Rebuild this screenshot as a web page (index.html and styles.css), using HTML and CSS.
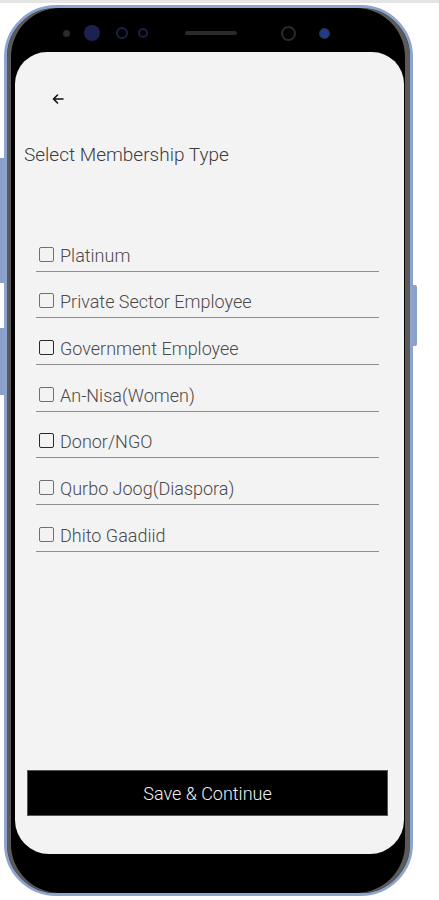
FILE: index.html
```html
<!DOCTYPE html>
<html lang="en">
<head>
    <meta charset="UTF-8">
    <meta name="viewport" content="width=device-width, initial-scale=1.0">
    <title>Select Membership Type</title>
    <link rel="stylesheet" href="styles.css">
</head>
<body>
    <div class="phone">
        <span class="side-btn left-1"></span>
        <span class="side-btn left-2"></span>
        <span class="side-btn right-1"></span>

        <div class="top-bezel">
            <span class="dot sensor"></span>
            <span class="dot lens-big"></span>
            <span class="dot ring"></span>
            <span class="dot ring small"></span>
            <span class="speaker"></span>
            <span class="dot front-cam"></span>
            <span class="dot blue-cam"></span>
        </div>

        <div class="screen">
            <div class="app-bar">
                <svg class="back" width="14" height="14" viewBox="0 0 14 14">
                    <path d="M12 7H2.5M6.5 3L2.5 7l4 4" fill="none" stroke="#111" stroke-width="1.6" stroke-linecap="round" stroke-linejoin="round"/>
                </svg>
            </div>

            <h1 class="title">Select Membership Type</h1>

            <div class="options">
                <label class="option"><span class="box"></span>Platinum</label>
                <label class="option"><span class="box"></span>Private Sector Employee</label>
                <label class="option"><span class="box dark"></span>Government Employee</label>
                <label class="option"><span class="box"></span>An-Nisa(Women)</label>
                <label class="option"><span class="box dark"></span>Donor/NGO</label>
                <label class="option"><span class="box"></span>Qurbo Joog(Diaspora)</label>
                <label class="option"><span class="box"></span>Dhito Gaadiid</label>
            </div>

            <div class="spacer"></div>

            <button class="save">Save &amp; Continue</button>
        </div>
    </div>
</body>
</html>
```

FILE: styles.css
```css
body {
    margin: 0;
    background: #ffffff;
    font-family: Roboto, "Liberation Sans", sans-serif;
    border-top: 3px solid #e4e4e4;
}
.phone {
    position: relative;
    box-sizing: border-box;
    width: 409px;
    height: 891px;
    margin: 2px 0 0 4px;
    border: 3px solid #8ea4cc;
    border-radius: 52px;
    background: #000;
    box-shadow: inset 4px 0 0 #5a5a5a, inset -5px 0 0 #5a5a5a;
    display: flex;
    flex-direction: column;
    padding: 0 6px 0 8px;
}
.side-btn {
    position: absolute;
    width: 4px;
    background: #8a9fc9;
}
.left-1 { left: -7px; top: 150px; height: 125px; }
.left-2 { left: -7px; top: 320px; height: 67px; }
.right-1 { right: -7px; top: 277px; height: 61px; border-radius: 0 2px 2px 0; }

.top-bezel {
    height: 44px;
    display: flex;
    align-items: center;
    padding-top: 6px;
    box-sizing: border-box;
}
.dot {
    display: inline-block;
    border-radius: 50%;
}
.sensor {
    width: 7px;
    height: 7px;
    background: #2a2a2a;
    margin-left: 48px;
}
.lens-big {
    width: 16px;
    height: 16px;
    background: #1c2150;
    margin-left: 14px;
}
.ring {
    width: 8px;
    height: 8px;
    border: 2px solid #1b2046;
    margin-left: 16px;
}
.ring.small {
    width: 6px;
    height: 6px;
    margin-left: 10px;
}
.speaker {
    width: 52px;
    height: 4px;
    border-radius: 2px;
    background: #2a2a2a;
    margin-left: 37px;
}
.front-cam {
    width: 11px;
    height: 11px;
    border: 2px solid #2a2a2a;
    margin-left: 44px;
}
.blue-cam {
    width: 9px;
    height: 9px;
    background: #1f3b8c;
    border: 1px solid #333;
    margin-left: 23px;
}

.screen {
    flex: 1;
    margin-bottom: 39px;
    background: #f4f3f4;
    border-radius: 32px 32px 34px 34px;
    display: flex;
    flex-direction: column;
    padding: 0 16px 0 12px;
}
.app-bar {
    height: 54px;
    display: flex;
    align-items: flex-end;
    padding-left: 24px;
}
.back {
    display: block;
}
.title {
    margin: 39px 0 0 -3px;
    font-size: 19px;
    font-weight: 300;
    color: #3c3c3c;
    line-height: 20px;
}
.options {
    margin: 60px 9px 0 9px;
    display: flex;
    flex-direction: column;
}
.option {
    height: 46.67px;
    box-sizing: border-box;
    display: flex;
    align-items: flex-end;
    padding: 0 0 5px 3px;
    border-bottom: 1.5px solid #8e8e8e;
    font-size: 18px;
    font-weight: 300;
    line-height: 21px;
    color: #4a4a4a;
}
.box {
    width: 13px;
    height: 13px;
    border: 1.8px solid #707070;
    border-radius: 2px;
    margin: 0 6px 4px 0;
}
.box.dark {
    border-color: #2a2a2a;
}
.spacer {
    flex: 1;
}
.save {
    height: 46px;
    background: #000;
    color: #f0f0f0;
    border: 1px solid #555;
    font-family: Roboto, "Liberation Sans", sans-serif;
    font-size: 18px;
    font-weight: 300;
    margin-bottom: 38px;
}
```
